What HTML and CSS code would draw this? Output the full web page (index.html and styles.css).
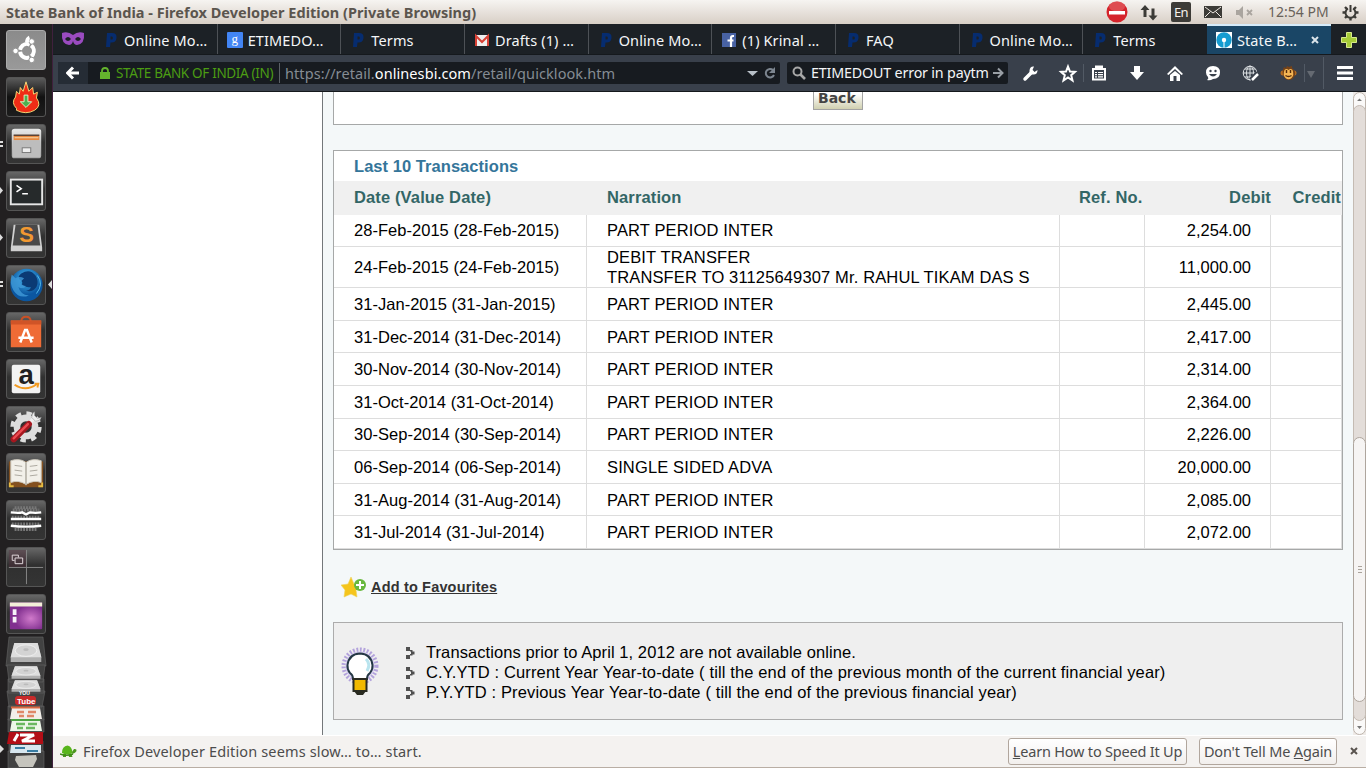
FILE: index.html
```html
<!DOCTYPE html>
<html lang="en">
<head>
<meta charset="utf-8">
<title>State Bank of India</title>
<link rel="stylesheet" href="styles.css">
</head>
<body>
<svg width="0" height="0" class="defs" aria-hidden="true">
<defs>
<symbol id="p" viewBox="0 0 16 16"><path d="M4 1h5q5 0 4.500 5-.5 4.500-5 4.500H7.500L7 15H3zM7.500 4.500v3H9q.8 0 .8-1.500T9 4.500z" fill="#062c6f" fill-rule="evenodd"/></symbol>
<radialGradient id="ff" cx=".5" cy=".3"><stop offset="0" stop-color="#45b7ef"/><stop offset="1" stop-color="#0b56a0"/></radialGradient>
<linearGradient id="silver" x2="0" y2="1"><stop offset="0" stop-color="#e8e8e8"/><stop offset="1" stop-color="#a2a2a2"/></linearGradient>
<radialGradient id="purple" cx=".65" cy=".6"><stop offset="0" stop-color="#d07acb"/><stop offset="1" stop-color="#81308f"/></radialGradient>
<symbol id="disk" viewBox="0 0 40 24" preserveAspectRatio="none"><path d="M7 2h26l4 15v5H3v-5z" fill="#b0b0b0"/><path d="M7 2h26l4 15H3z" fill="#dedede"/><ellipse cx="20" cy="10" rx="12" ry="6" fill="#d3d3d3" stroke="#f0f0f0"/><ellipse cx="20" cy="9" rx="3" ry="1.500" fill="#bbb"/></symbol>
<symbol id="arrow" viewBox="0 0 9 12"><path d="M0 0h4v4H0zM4 3h2.500v1.500H4zM5 4.500h3.500v3H5zM4 7h2.500v1.500H4zM0 8h4v4H0z" fill="#505050"/></symbol>
</defs>
</svg>

<header class="panel">
  <span class="panel-title">State Bank of India - Firefox Developer Edition (Private Browsing)</span>
  <svg class="panel-icons" width="160" height="24" viewBox="1100 0 160 24">
    <circle cx="1117" cy="12" r="10.500" fill="#d5232b"/><ellipse cx="1117" cy="6.500" rx="8" ry="5" fill="#e4686a" opacity=".6"/><path d="M1109 11h16v3.500h-16z" fill="#fff"/>
    <g fill="#3c3b37"><path d="M1145 5l4.500 5h-3v7h-3v-7h-3zM1153 20.500l-4.500-5h3v-7h3v7h3z"/><rect x="1171" y="2" width="20" height="20" rx="2"/><rect x="1204" y="6" width="18" height="12"/></g>
    <path d="M1205 7l8 6 8-6M1205 17l5.500-5.500M1221 17l-5.500-5.500" fill="none" stroke="#eee8e2"/>
    <text x="1174" y="17" class="lang">En</text>
    <path d="M1236 10h3l4-4v13l-4-4h-3z" fill="#aaa59f"/><path d="M1247 10l5 5m0-5l-5 5" stroke="#aaa59f" stroke-width="1.800"/>
  </svg>
  <span class="clock">12:54 PM</span>
  <svg class="gear" width="17" height="17" viewBox="0 0 17 17" fill="none" stroke="#3c3b37" stroke-width="2"><path d="M6 4.500a5 5 0 1 0 5 0M8.500 1v7"/><path stroke-width="2.400" d="M8.500 13v3.500M4 8.500H.5M16.500 8.500H13M5.500 11.500L3 14M11.500 11.500L14 14M5 5L3 3M12 5l2-2"/></svg>
</header>

<div class="desktop">
<nav class="launcher">
  <svg class="tile dash" viewBox="0 0 40 40"><circle cx="21" cy="21" r="7.300" fill="none" stroke="#fff" stroke-width="4.200" stroke-dasharray="13.200 2.090" stroke-dashoffset="-1" transform="rotate(-60 21 21)"/><g fill="#fff" stroke="#939393" stroke-width="1"><circle cx="9" cy="21" r="2.900"/><circle cx="26" cy="11" r="2.900"/><circle cx="26" cy="30.500" r="2.900"/></g><path d="M19 12q0-5 4-7l1 3-1 4z" fill="#fff"/></svg>
  <svg class="tile" viewBox="0 0 40 40"><path d="M10 32Q4 26 9 20l1-6 3 3 1-7 3 4 3-10 3 10 4-4 1 7 4-2-1 6q6 8-2 13-9 5-19 0z" fill="#ef2c16" stroke="#f7dc78"/><path d="M18 18h4v7h4l-6 6-6-6h4z" fill="#4caf50" stroke="#e0f3c9" stroke-width="1"/></svg>
  <svg class="tile" viewBox="0 0 40 40"><rect x="5" y="4" width="31" height="31" rx="3" fill="url(#silver)"/><path d="M7 11h27v5H7z" fill="#e78940"/><path d="M7 10h27v1.500H7z" fill="#5c4335"/><path d="M8 13h25v1H8z" fill="#f8d6a5"/><path d="M6 16h29v18H6z" fill="#bdbdbd"/><rect x="16" y="24" width="9" height="5" fill="#eee" stroke="#777"/></svg>
  <svg class="tile" viewBox="0 0 40 40"><rect x="4" y="8" width="33" height="26" fill="#262a2b" stroke="#e6e6e6" stroke-width="2"/><path d="M10 14l5 3.500-5 3.500M16 23h6" fill="none" stroke="#fff" stroke-width="1.600"/></svg>
  <svg class="tile" viewBox="0 0 40 40"><path d="M7 6h27l3 24v4H4v-4z" fill="#d0d0d0"/><path d="M9 6h23l3 22H6z" fill="#494949"/><text x="13" y="24" class="sublime">S</text></svg>
  <svg class="tile" viewBox="0 0 40 40"><circle cx="20.500" cy="20" r="17" fill="url(#ff)"/><path d="M15 8q9-6 15 2 4 6 1 12-4 6-11 4 5-1 5-4-5 1-10-2 3-3-2-6-2-3 2-6z" fill="#0b3a74"/><path d="M5 9l4 4q4-3 9 0l-4 4q2 4 6 4-3 4-8 1 2 8 11 9-10 4-16-5-5-8-2-17z" fill="#409bd9" opacity=".8"/><path d="M32 10q7 9-1 19" fill="none" stroke="#5ac1ed" stroke-width="1"/></svg>
  <svg class="tile" viewBox="0 0 40 40"><path d="M15 9q0-5 5-5t5 5" fill="none" stroke="#c95025" stroke-width="2"/><path d="M4 8h32v28H4z" fill="#ef6b35"/><path d="M4 8h32v4H4z" fill="#d05427"/><path d="M14 31l5-13h2l5 13M12 26h16" fill="none" stroke="#fff" stroke-width="2.600"/></svg>
  <svg class="tile" viewBox="0 0 40 40"><rect x="5" y="5" width="30" height="30" rx="2" fill="#f3f3f3"/><text x="12" y="25" class="amazon">a</text><path d="M8 26q12 8 24-1M29 25h4l-1 4" fill="none" stroke="#f29b22" stroke-width="2"/></svg>
  <svg class="tile" viewBox="0 0 40 40"><circle cx="20" cy="21" r="14" fill="none" stroke="#dedede" stroke-width="5" stroke-dasharray="5.500 5.500"/><circle cx="20" cy="21" r="9.500" fill="none" stroke="#ddd" stroke-width="7"/><path d="M24 17l5-6" stroke="#eee" stroke-width="4"/><path d="M29 5q-3 2-3 6l4 4q5 0 6-4l-4 1-3-3z" fill="#eee" stroke="#999" stroke-width=".6"/><path d="M7 34l16-16" stroke="#a5171f" stroke-width="6.500" stroke-linecap="round"/><path d="M7 33l15-15" stroke="#ec4a50" stroke-width="2.500" stroke-linecap="round"/></svg>
  <svg class="tile" viewBox="0 0 40 40"><path d="M2 8h36v27H2z" fill="#83501f"/><path d="M4 7q10-3 16 2v23q-8-5-16-2zM36 7q-10-3-16 2v23q8-5 16-2z" fill="#f2f0e9" stroke="#c9c5b9"/><path d="M8 12l8 1m-8 4l8 1m-8 4l8 1M24 13l8-1m-8 6l8-1m-8 6l8-1M20 9v24" stroke="#aaa79d"/><path d="M3 30v4h4m26 0h4v-4" fill="none" stroke="#e5ba41" stroke-width="2"/></svg>
  <svg class="tile" viewBox="0 0 40 40"><path d="M8 7h24M6 9.500h28M5 17h30M5 24h30M8 30h24" stroke="#777" stroke-width="3" stroke-dasharray="2 1"/><path d="M4 12q9 1 12 0l4 2 4-2q6 1 12 0M4 19h32M4 26q16 2 32 0" fill="none" stroke="#fff" stroke-width="2.500"/></svg>
  <svg class="tile" viewBox="0 0 40 40"><path d="M2 2h18v18H2z" fill="#582f40" opacity=".35"/><path d="M2 20.500h36M20.500 2v36" stroke="#888"/><path d="M8 13H5.500V7.500H12V10M8.500 10.500h8v6h-8z" fill="none" stroke="#e6dce0"/></svg>
  <svg class="tile" viewBox="0 0 40 40"><rect x="3" y="8" width="34" height="28" rx="1" fill="url(#purple)"/><path d="M3 8h34v4H3z" fill="#f3efd9"/><path d="M6 15h4v6H6zm0 8h4v6H6z" fill="#f7f3f8"/></svg>
  <svg class="stack" width="42" height="132" viewBox="0 0 42 132">
    <g fill="#424242" stroke="#656565" stroke-width=".6"><path d="M4 1h34l3 29H1z"/><path d="M2 29h38l-2 17H4zM3 43h36v14H3zM2 55h38l-3 16H4zM3 70h36v14H3zM3 83h36v13H3zM4 105h34v10H4zM3 115h36v17H3z"/></g>
    <use href="#disk" x="3" y="5" width="36" height="23"/><use href="#disk" x="4" y="29" width="34" height="15"/><use href="#disk" x="4" y="43" width="34" height="14"/>
    <rect x="10" y="60" width="21" height="9" rx="3" fill="#c92a2a"/><text x="14" y="58.500" class="tube small">YOU</text><text x="12" y="67.500" class="tube">Tube</text>
    <path d="M7 72h28l2 11H5z" fill="#f2eee9"/><path d="M6 71.500h29" stroke="#db6841" stroke-width="2"/><path d="M12 76h7m4 0h8m-17 4h5m3 0h7" stroke="#df8868" stroke-width="2.500"/><path d="M7 84h28l2 11H5z" fill="#edf6e8"/><path d="M6 84h29" stroke="#4ca443" stroke-width="2"/><path d="M11 88h9m3 0h9m-20 4h6m3 0h9" stroke="#6ab85f" stroke-width="2.500"/><path d="M4 96h34v12H2z" fill="#b30e16"/><path d="M9 105l4-7m2 1h14L17 105h13" fill="none" stroke="#fff" stroke-width="3"/><path d="M6 109h30v8H5z" fill="#d7e7ef"/><path d="M10 112h10m2 3h11" stroke="#397da3" stroke-width="2"/><path d="M11 120l20-1 1 4-4 8H14l-4-7z" fill="#c5c4bd"/>
  </svg>
  <svg class="running" width="53" height="744" viewBox="0 24 53 744" fill="#ddd"><path d="M0 141h3v2H0zm0 4h3v2H0zM0 187l3 3.500-3 3.500zM0 234l3 3.500-3 3.500zM0 281h3v2H0zm0 4h3v2H0zM0 745l4 4-4 4zM52 280v9l-4-4.500z"/></svg>
</nav>

<main class="browser">
  <div class="tabs">
    <svg class="mask" width="24" height="16" viewBox="0 0 24 16"><path d="M1 2q6-2 11 2 5-4 11-2 1 11-7 12-3 0-4-4-1 4-4 4Q0 13 1 2z" fill="#9a4bc0"/><path d="M4 8q3-4 6 0-3 4-6 0M14 8q3-4 6 0-3 4-6 0" fill="#1d2126"/></svg>
    <div class="tab"><svg><use href="#p"/></svg><span>Online Mo…</span></div>
    <div class="tab google"><svg viewBox="0 0 16 16"><rect width="16" height="16" rx="1" fill="#4285f4"/><text x="4.500" y="11" class="g">g</text></svg><span>ETIMEDO…</span></div>
    <div class="tab"><svg><use href="#p"/></svg><span>Terms</span></div>
    <div class="tab"><svg viewBox="0 0 16 16"><path d="M1 3h14v11H1z" fill="#eee"/><path d="M2 14V4l6 6 6-6v10" fill="none" stroke="#d84135" stroke-width="2"/></svg><span>Drafts (1) …</span></div>
    <div class="tab"><svg><use href="#p"/></svg><span>Online Mo…</span></div>
    <div class="tab"><svg viewBox="0 0 16 16"><path d="M1 1h14v14H1z" fill="#4862a3"/><path d="M13 4h-1q-2 0-2 2v9M6.500 8.500h6" fill="none" stroke="#fff" stroke-width="2.200"/></svg><span>(1) Krinal …</span></div>
    <div class="tab"><svg><use href="#p"/></svg><span>FAQ</span></div>
    <div class="tab"><svg><use href="#p"/></svg><span>Online Mo…</span></div>
    <div class="tab"><svg><use href="#p"/></svg><span>Terms</span></div>
    <div class="tab active"><svg viewBox="0 0 16 16"><path fill="#fff" d="M0 0h16v16H0z"/><circle cx="8" cy="8" r="7.700" fill="#149cd1"/><circle cx="8" cy="8" r="2.200" fill="#fff"/><path d="M7.500 9h1v7h-1z" fill="#fff"/></svg><span>State B…</span><svg class="close" viewBox="0 0 8 8"><path d="M1 1l6 6m0-6L1 7" stroke="#dbe4ea" stroke-width="2"/></svg></div>
    <svg class="plus" width="16" height="16" viewBox="0 0 16 16"><path d="M5.500.5h5v5h5v5h-5v5h-5v-5h-5v-5h5z" fill="#a6cc38" stroke="#d8ec8c"/></svg>
  </div>

  <div class="toolbar">
    <div class="url">
      <div class="back-nav"><svg width="14" height="14" viewBox="0 0 14 14"><path d="M7 1.500L1.500 7 7 12.500M2 7h11" fill="none" stroke="#fff" stroke-width="3"/></svg></div>
      <svg class="lock" width="10" height="12" viewBox="0 0 10 12"><path d="M2 6V4q0-3 3-3t3 3v2" fill="none" stroke="#64b42d" stroke-width="1.800"/><path d="M0 5h10v7H0z" fill="#64b42d"/></svg>
      <span class="identity">STATE BANK OF INDIA (IN)</span>
      <span class="address">https://retail.<b>onlinesbi.com</b>/retail/quicklook.htm</span>
      <svg class="url-tools" width="30" height="14" viewBox="0 0 30 14"><path d="M0 5h11L5.500 10z" fill="#b8c0c8"/><path d="M26 4a4.300 4.300 0 1 0 1 5" fill="none" stroke="#7c858f" stroke-width="2"/><path d="M28 1v6h-6z" fill="#7c858f"/></svg>
    </div>
    <div class="search">
      <svg width="14" height="14" viewBox="0 0 14 14" fill="none" stroke="#a7a7a7" stroke-width="2"><circle cx="5.500" cy="5.500" r="4"/><path stroke-width="2.600" d="M8.500 8.500L13 13"/></svg>
      <span>ETIMEDOUT error in paytm</span>
      <svg width="11" height="12" viewBox="0 0 11 12"><path d="M0 6h9M5 1.500L9.500 6 5 10.500" fill="none" stroke="#999fa5" stroke-width="2"/></svg>
    </div>
    <svg class="buttons" width="354" height="36" viewBox="1012 55 354 36">
      <path d="M1025 79l7-7" stroke="#fff" stroke-width="3.500" stroke-linecap="round"/><path d="M1034 66.500q-4-.5-4.500 4t4 4q4 0 4-4.500l-3 2-2-2z" fill="#fff"/>
      <path d="M1068 66.500l2 5 5 .3-3.800 3.400 1.300 5.300-4.500-3-4.500 3 1.300-5.300-3.800-3.400 5-.3z" fill="none" stroke="#fff" stroke-width="2"/>
      <path d="M1083.500 64v18" stroke="#525a65"/>
      <path d="M1093 69h12v10.500h-12z" fill="none" stroke="#fff" stroke-width="2"/><path d="M1095 65.500h8v3h-8z" fill="#fff"/><path d="M1095 72.500h2m1 0h5m-8 2.200h2m1 0h5m-8 2.200h2m1 0h5" stroke="#fff" stroke-width="1.200"/>
      <path d="M1134 66h6v6h4l-7 8-7-8h4z" fill="#fff"/>
      <path d="M1167 74l8-8 8 8-1.500 1-6.500-6-6.500 6zM1170 75l5-4 5 4v6h-3.500v-5h-3v5h-3.500z" fill="#fff"/>
      <path d="M1213 66q7 0 7 6.500t-7 6.500q-3 2-6 1 2-1 1-3-2-2-2-4.500 0-6.500 7-6.500z" fill="#fff"/><circle cx="1210.500" cy="71" r="1.200" fill="#39404b"/><circle cx="1215.500" cy="71" r="1.200" fill="#39404b"/><path d="M1209 74h8q-4 5-8 0" fill="#39404b"/>
      <circle cx="1250" cy="73" r="6.800" fill="none" stroke="#dfe3e6"/><path d="M1243 73h14m-7-7v14m-5-11h10m-10 8h10" stroke="#dfe3e6"/><ellipse cx="1250" cy="73" rx="3.500" ry="7" fill="none" stroke="#dfe3e6"/><path d="M1251 80l7-7" stroke="#39404b" stroke-width="5"/><path d="M1252 80l6-6" stroke="#fff" stroke-width="2.500"/>
      <circle cx="1283" cy="73" r="2.500" fill="#b86d22"/><circle cx="1294" cy="73" r="2.500" fill="#b86d22"/><path d="M1284 67l2 1 1-2 2 1 3-1v2q4 3 3 7-2 5-6 5t-6-5q-1-5 1-8z" fill="#754219"/><path d="M1284.500 70q2-2 4 0 2-2 4 0 2 5-1 8-3 2.500-6 0-3-3-1-8z" fill="#f5b755"/><path d="M1286.500 70v3m4-3v3m-5 2.500q3 2 6 0" fill="none" stroke="#552b0c" stroke-width="1.400"/>
      <path d="M1304.500 64v18M1323.500 57v32" stroke="#525a65"/><path d="M1307 71h8l-4 7z" fill="#656a72"/>
      <path d="M1337 67.500h16m-16 5.500h16m-16 5.500h16" stroke="#fff" stroke-width="3"/>
    </svg>
  </div>

  <div class="viewport">
    <div class="page">
      <section class="top-box"><span class="back-btn">Back</span></section>
      <section class="transactions">
        <h2>Last 10 Transactions</h2>
        <table>
          <colgroup><col class="c1"><col class="c2"><col class="c3"><col class="c4"><col class="c5"></colgroup>
          <thead><tr><th>Date (Value Date)</th><th>Narration</th><th>Ref. No.</th><th>Debit</th><th>Credit</th></tr></thead>
          <tbody>
            <tr class="h32 up"><td>28-Feb-2015 (28-Feb-2015)</td><td>PART PERIOD INTER</td><td></td><td>2,254.00</td><td></td></tr>
            <tr class="h41"><td>24-Feb-2015 (24-Feb-2015)</td><td>DEBIT TRANSFER<br>TRANSFER TO 31125649307 Mr. RAHUL TIKAM DAS S</td><td></td><td>11,000.00</td><td></td></tr>
            <tr><td>31-Jan-2015 (31-Jan-2015)</td><td>PART PERIOD INTER</td><td></td><td>2,445.00</td><td></td></tr>
            <tr class="h32"><td>31-Dec-2014 (31-Dec-2014)</td><td>PART PERIOD INTER</td><td></td><td>2,417.00</td><td></td></tr>
            <tr><td>30-Nov-2014 (30-Nov-2014)</td><td>PART PERIOD INTER</td><td></td><td>2,314.00</td><td></td></tr>
            <tr><td>31-Oct-2014 (31-Oct-2014)</td><td>PART PERIOD INTER</td><td></td><td>2,364.00</td><td></td></tr>
            <tr class="h32 up"><td>30-Sep-2014 (30-Sep-2014)</td><td>PART PERIOD INTER</td><td></td><td>2,226.00</td><td></td></tr>
            <tr><td>06-Sep-2014 (06-Sep-2014)</td><td>SINGLE SIDED ADVA</td><td></td><td>20,000.00</td><td></td></tr>
            <tr class="h32"><td>31-Aug-2014 (31-Aug-2014)</td><td>PART PERIOD INTER</td><td></td><td>2,085.00</td><td></td></tr>
            <tr><td>31-Jul-2014 (31-Jul-2014)</td><td>PART PERIOD INTER</td><td></td><td>2,072.00</td><td></td></tr>
          </tbody>
        </table>
      </section>
      <div class="favourites">
        <svg width="26" height="22" viewBox="0 0 26 22"><path d="M10 1l3 7 7 1-5 5 1 7-6-3-7 3 1-7-4-5 7-1z" fill="#f5c51c" stroke="#efd35b" stroke-width=".6"/><circle cx="19" cy="9" r="6" fill="#68b83e"/><path d="M19 5v8m-4-4h8" stroke="#fff" stroke-width="2"/></svg>
        <a>Add to Favourites</a>
      </div>
      <section class="notes">
        <svg class="bulb" width="40" height="52" viewBox="0 0 40 52"><circle cx="20" cy="20" r="16" fill="none" stroke="#b3a3dc" stroke-width="5" stroke-dasharray="1.800 1.600"/><circle cx="20" cy="20" r="14.500" fill="#d5cdef"/><path d="M13 33q0-4-3-6-3-4-2.500-8Q9 8 20 7.500 31 8 32.500 19q.5 4-2.500 8-3 2-3 6z" fill="#fff" stroke="#243744" stroke-width="2"/><path d="M26 13q5 5 1 12" fill="none" stroke="#b9e4ee" stroke-width="3"/><path d="M13.500 33h13v12h-13z" fill="#f1b900" stroke="#292a20" stroke-width="2"/><path d="M14 45h12l-3 4h-6z" fill="#292a20"/></svg>
        <ul>
          <li class="n1"><svg><use href="#arrow"/></svg>Transactions prior to April 1, 2012 are not available online.</li>
          <li><svg><use href="#arrow"/></svg>C.Y.YTD : Current Year Year-to-date ( till the end of the previous month of the current financial year)</li>
          <li><svg><use href="#arrow"/></svg>P.Y.YTD : Previous Year Year-to-date ( till the end of the previous financial year)</li>
        </ul>
      </section>
    </div>
    <div class="scrollbar">
      <svg width="13" height="643" viewBox="0 0 13 643"><rect x=".5" y=".5" width="12" height="642" rx="6" fill="#faf9f8" stroke="#bdb4ac"/><rect x=".5" y="13.500" width="12" height="615" rx="6" fill="#e3ddd9" stroke="#c4bbb3"/><rect x=".5" y="345.500" width="12" height="264" rx="6" fill="#f6f4f3" stroke="#aea59d"/><path d="M4 9h5L6.500 6.500zM4 634h5l-2.500 3z" fill="#777"/><path d="M5 474.500h4m-4 3h4m-4 3h4" stroke="#aaa39c"/></svg>
    </div>
  </div>

  <footer class="notification">
    <svg width="17" height="15" viewBox="0 0 17 15"><path d="M2 9q0-7 5.500-7.500Q12 2 12.500 9q-5 3-10.500 0z" fill="#58b51c"/><path d="M12 8l2-3q3-.5 2.500 2-1 2-4 3zM3 10h3v3H3zm5.500 0h3l1 3H9z" fill="#4c9720"/><path d="M0 10q6 2.500 13 0" fill="none" stroke="#3f8a17" stroke-width="1.500"/></svg>
    <span class="message">Firefox Developer Edition seems slow… to… start.</span>
    <button class="learn"><u>L</u>earn How to Speed It Up</button>
    <button class="dont">Don't Tell Me <u>A</u>gain</button>
    <svg class="dismiss" width="8" height="8" viewBox="0 0 8 8"><path d="M1 1l6 6m0-6L1 7" stroke="#59544f" stroke-width="2"/></svg>
  </footer>
</main>
</div>
</body>
</html>
```
FILE: styles.css
```css
* { box-sizing: border-box; }
body { margin: 0; width: 1366px; height: 768px; overflow: hidden; font: 14.5px/20px "Noto Sans", sans-serif; color: #4c4c4c; }
svg { display: block; flex-shrink: 0; }
.defs { position: absolute; }
.panel { height: 24px; display: flex; align-items: center; background: linear-gradient(#f6f4f1, #d8cfc6); padding: 0 7px 0 6px; }
.panel-title { font-size: 14.5px; font-weight: 700; color: #5b554e; letter-spacing: .03px; white-space: nowrap; margin-right: auto; }
.panel-icons { margin-right: 8px; }
.lang { font: 13px "Noto Sans", sans-serif; fill: #f5f1ed; letter-spacing: -.7px; }
.clock { width: 61px; font-size: 14px; color: #69625a; white-space: nowrap; }
.gear { margin-left: 13px; }
.desktop { display: flex; height: 744px; }
.launcher { position: relative; width: 53px; flex-shrink: 0; background: #222021; border-right: 1px solid #40213d; padding: 6px 0 0 5px; display: flex; flex-direction: column; gap: 7px; overflow: hidden; }
.tile { width: 40px; height: 40px; margin-left: 1px; border-radius: 3px; border: 1px solid #555; background: linear-gradient(#676767, #303030 45%, #343434); flex-shrink: 0; }
.tile.dash { background: linear-gradient(#8b8b8b, #999); border-color: #aaa; }
.tile:nth-child(2) { background: linear-gradient(#5b5b5b, #111 50%, #1d1d1d); }
.stack { margin-top: -5px; }
.running { position: absolute; left: 0; top: 0; }
.sublime { font: bold 23px "Liberation Sans", sans-serif; fill: #f29931; }
.amazon { font: bold 29px "Liberation Sans", sans-serif; fill: #202020; }
.g { font: 13px "Liberation Serif", serif; fill: #fff; }
.tube { font: bold 8px "Liberation Sans", sans-serif; fill: #fff; }
.tube.small { font-size: 5px; }
.browser { width: 1313px; display: flex; flex-direction: column; }
.tabs { height: 31px; background: #1c2126; display: flex; align-items: stretch; border-bottom: 1px solid #15191d; }
.mask { margin: 7px 9px 0 8px; }
.tab { width: 123.67px; flex-shrink: 0; display: flex; align-items: center; padding: 1px 0 0 9px; border-right: 1px solid #4d5156; color: #f4f6f8; white-space: nowrap; font-size: 14.5px; letter-spacing: .12px; }
.tab > svg { width: 16px; height: 16px; margin-right: 5px; }
.tab.active { background: #1a4666; border-top: 2px solid #d5ebfa; border-right: 0; padding-top: 0; }
.tab .close { width: 8px; height: 8px; margin: 0 12px 0 auto; }
.tab:nth-last-child(3) { border-right: 0; }
.plus { margin: 8px 0 0 10px; }
.toolbar { height: 37px; background: #39404b; display: flex; align-items: center; padding-left: 5px; border-bottom: 1px solid #14181c; }
.url { width: 722px; height: 22px; background: #171b20; border-radius: 2px; display: flex; align-items: center; white-space: nowrap; }
.back-nav { width: 30px; height: 22px; background: #252c35; display: grid; place-items: center; }
.lock { margin: 0 6px 0 12px; }
.identity { width: 164px; height: 20px; color: #4b9d13; font-size: 13.5px; border-right: 1px solid #5b6066; letter-spacing: -.33px; }
.address { margin-left: 5px; color: #858c94; letter-spacing: .08px; }
.address b { font-weight: 400; color: #fff; }
.url-tools { margin-left: auto; margin-right: 3px; }
.search { width: 221px; height: 22px; margin-left: 7px; padding: 0 4px 0 5px; background: #171b20; border-radius: 2px; display: flex; align-items: center; color: #f3f5f7; white-space: nowrap; }
.search span { margin: 0 auto 0 5px; font-size: 14.3px; letter-spacing: -.18px; }
.buttons { margin-left: 4px; }
.viewport { height: 643px; display: flex; background: #fff; overflow: hidden; }
.page { margin-left: 269px; width: 1031px; height: 643px; border-left: 1px solid #73777a; background: #f4f8f9; padding: 0 10px; font: 16.5px/20px "Liberation Sans", sans-serif; color: #000; }
.top-box { height: 33px; border: 1px solid #a6a8a8; border-top: 0; background: #fff; display: flex; justify-content: center; overflow: hidden; }
.back-btn { width: 50px; height: 21px; margin-top: -3px; padding-left: 4px; border: 1px solid #a3a3a3; background: linear-gradient(#fff 20%, #d0d0b0); font: bold 14px/17px "DejaVu Sans", sans-serif; color: #444; }
.transactions { margin-top: 25px; border: 1px solid #a6a8a8; background: #fff; height: 400px; }
h2 { margin: 0; height: 30px; padding: 5px 20px; font: bold 16.5px/20px "Liberation Sans", sans-serif; letter-spacing: .05px; color: #34759a; }
table { width: 1008px; table-layout: fixed; border-collapse: separate; border-spacing: 0; }
.c1 { width: 253px; } .c2 { width: 473px; } .c3 { width: 85px; } .c4 { width: 126px; } .c5 { width: 71px; }
th { height: 34px; padding: 0 0 2px 20px; background: #f0f0f0; color: #336666; letter-spacing: .13px; text-align: left; white-space: nowrap; }
th:nth-child(3) { padding-left: 19px; }
th:nth-child(4), th:nth-child(5) { text-align: right; padding-right: 0; }
th:nth-child(5) { padding-right: 1px; }
td { height: 33px; padding: 0 0 0 20px; border-right: 1px solid #ddd; border-bottom: 1px solid #ddd; white-space: nowrap; }
td:first-child { letter-spacing: .03px; }
td:nth-child(2) { letter-spacing: .14px; }
.h32 td { height: 32px; } .h41 td { height: 41px; }
.up td { padding-bottom: 1px; }
td:nth-child(4) { text-align: right; padding-left: 0; padding-right: 19px; }
.favourites { height: 72px; display: flex; align-items: center; padding-left: 8px; padding-top: 2px; }
.favourites a { margin-left: 4px; color: #333; font: bold 14.5px/16px "Liberation Sans", sans-serif; letter-spacing: .17px; text-decoration: underline; }
.notes { height: 98px; border: 1px solid #acacac; background: #efefef; display: flex; }
.bulb { margin: 23px 0 0 6px; }
.notes ul { list-style: none; margin: 19px 0 0 26px; padding: 0; }
.notes li { display: flex; align-items: center; white-space: nowrap; height: 20px; letter-spacing: .13px; }
.notes li.n1 { letter-spacing: .08px; }
.notes li svg { width: 9px; height: 12px; margin: 1px 11px 0 0; }
.scrollbar { width: 13px; background: #eeeae7; }
.notification { height: 33px; background: #f4f2f0; border-top: 1px solid #fff; border-bottom: 1px solid #b9aea4; display: flex; align-items: center; padding: 0 8px 1px 7px; }
.message { margin: 0 auto 0 6px; letter-spacing: .14px; }
button { height: 27px; padding: 0; border: 1px solid #b1a69d; border-radius: 3px; background: linear-gradient(#fff, #f2efed); font: 14.5px/20px "Noto Sans", sans-serif; color: #4c4c4c; white-space: nowrap; }
.learn { width: 179px; margin-right: 12px; letter-spacing: -.2px; }
.dont { width: 138px; letter-spacing: -.15px; }
.dismiss { margin-left: 13px; }
```
